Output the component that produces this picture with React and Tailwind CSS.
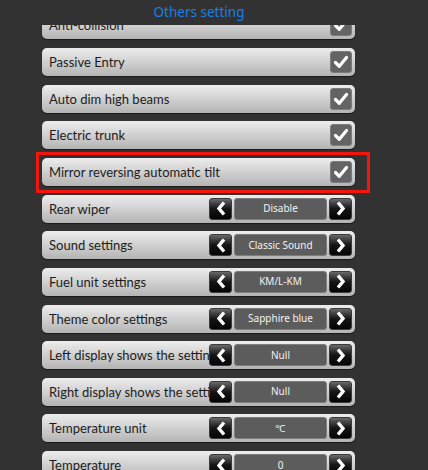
import React from "react";

const rows = [
  { label: "Anti-collision", type: "check" },
  { label: "Passive Entry", type: "check" },
  { label: "Auto dim high beams", type: "check" },
  { label: "Electric trunk", type: "check" },
  { label: "Mirror reversing automatic tilt", type: "check", highlight: true },
  { label: "Rear wiper", type: "select", value: "Disable" },
  { label: "Sound settings", type: "select", value: "Classic Sound" },
  { label: "Fuel unit settings", type: "select", value: "KM/L-KM" },
  { label: "Theme color settings", type: "select", value: "Sapphire blue" },
  { label: "Left display shows the setting", type: "select", value: "Null" },
  { label: "Right display shows the setting", type: "select", value: "Null" },
  { label: "Temperature unit", type: "select", value: "℃" },
  { label: "Temperature", type: "select", value: "0" },
];

function Check() {
  return (
    <div className="w-[22px] h-[22px] shrink-0 rounded-[3px] bg-[#646464] border border-[#7c7c7c] flex items-center justify-center">
      <svg width="16" height="14" viewBox="0 0 16 14">
        <path d="M2.5 7.5 L6.3 11.3 L13.5 2.5" fill="none" stroke="#ffffff" strokeWidth="3.2" strokeLinecap="round" strokeLinejoin="round" />
      </svg>
    </div>
  );
}

function Arrow({ dir }) {
  return (
    <div className="w-[23px] h-[22px] shrink-0 rounded-[3px] bg-gradient-to-b from-[#6a6a6a] via-[#151515] to-[#050505] border border-[#3a3a3a] flex items-center justify-center">
      <svg width="10" height="15" viewBox="0 0 10 15">
        {dir === "left" ? (
          <path d="M8 1.5 L3 7.5 L8 13.5" fill="none" stroke="#ffffff" strokeWidth="3.4" strokeLinejoin="miter" />
        ) : (
          <path d="M2 1.5 L7 7.5 L2 13.5" fill="none" stroke="#ffffff" strokeWidth="3.4" strokeLinejoin="miter" />
        )}
      </svg>
    </div>
  );
}

function Select({ value }) {
  return (
    <div className="flex items-center gap-[2px] shrink-0">
      <Arrow dir="left" />
      <div className="w-[93px] h-[22px] rounded-[3px] bg-[#5c5c5c] border border-[#7d7d7d] flex items-center justify-center text-[10px] text-[#f2f2f2]">
        {value}
      </div>
      <Arrow dir="right" />
    </div>
  );
}

function Row({ row }) {
  const inner = (
    <div className="w-[313px] h-[28px] rounded-[5px] bg-gradient-to-b from-[#ededed] to-[#b4b4b4] shadow-[0_1px_1px_rgba(0,0,0,0.5)] flex items-center pl-[7px] pr-[3px]">
      <div
        className="flex-1 min-w-0 overflow-hidden whitespace-nowrap text-[13px] text-[#1c1c1c] leading-[28px] h-[28px]"
        style={{ fontFamily: 'Lato, "Noto Sans", sans-serif' }}
      >
        {row.label}
      </div>
      {row.type === "check" ? <Check /> : <Select value={row.value} />}
    </div>
  );
  if (row.highlight) {
    return (
      <div className="relative self-start">
        {inner}
        <div className="absolute left-[-6px] top-[-6px] right-[-15px] bottom-[-7px] border-[3px] border-[#f2160c] pointer-events-none" />
      </div>
    );
  }
  return inner;
}

export default function App() {
  return (
    <div
      className="w-[428px] h-[470px] bg-[#323232] overflow-hidden flex flex-col"
      style={{ fontFamily: '"Noto Sans", "Open Sans", sans-serif' }}
    >
      <div className="h-[25px] shrink-0 flex items-center justify-center relative z-10 bg-[#323232]">
        <span className="text-[13.5px] text-[#1a7fe8] ml-[-30px]">Others setting</span>
      </div>
      <div className="flex-1 min-h-0 overflow-hidden">
        <div className="flex flex-col gap-[8.65px] pl-[42px] mt-[-13.6px]">
          {rows.map((r) => (
            <Row key={r.label} row={r} />
          ))}
        </div>
      </div>
    </div>
  );
}
